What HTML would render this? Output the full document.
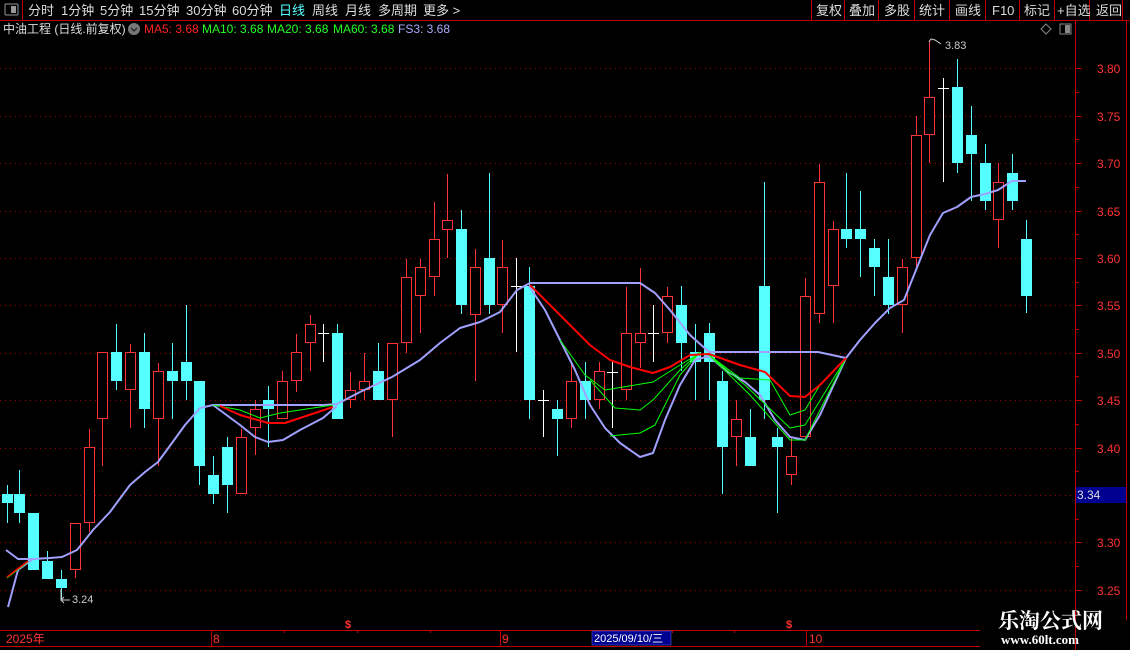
<!DOCTYPE html>
<html><head><meta charset="utf-8"><style>
html,body{margin:0;padding:0;background:#000;width:1130px;height:650px;overflow:hidden}
body{position:relative;font-family:"Liberation Sans","Noto Sans CJK SC",sans-serif}
.t{position:absolute;white-space:nowrap;font-size:12px;line-height:14px}
</style></head><body>
<svg id="s" width="1130" height="650" style="position:absolute;left:0;top:0" xmlns="http://www.w3.org/2000/svg" font-family="Liberation Sans, Noto Sans CJK SC, sans-serif">
<!-- top bar -->
<line x1="0" y1="20.5" x2="1130" y2="20.5" stroke="#c00000"/>
<line x1="22.5" y1="0" x2="22.5" y2="20" stroke="#c00000"/>
<rect x="5" y="4" width="13" height="11" fill="none" stroke="#999" rx="1"/>
<rect x="11" y="6" width="5" height="7" fill="#999"/>
<g stroke="#c00000">
<line x1="811.5" y1="0" x2="811.5" y2="20"/><line x1="844.5" y1="0" x2="844.5" y2="20"/>
<line x1="878.5" y1="0" x2="878.5" y2="20"/><line x1="914.5" y1="0" x2="914.5" y2="20"/>
<line x1="949.5" y1="0" x2="949.5" y2="20"/><line x1="985.5" y1="0" x2="985.5" y2="20"/>
<line x1="1019.5" y1="0" x2="1019.5" y2="20"/><line x1="1054.5" y1="0" x2="1054.5" y2="20"/>
<line x1="1089.5" y1="0" x2="1089.5" y2="20"/><line x1="1122.5" y1="0" x2="1122.5" y2="20"/>
</g>
<g font-size="13" fill="#ddd">
<text x="28" y="15">分时</text><text x="61" y="15">1分钟</text><text x="100" y="15">5分钟</text>
<text x="139" y="15">15分钟</text><text x="186" y="15">30分钟</text><text x="232" y="15">60分钟</text>
<text x="279" y="15" fill="#5ff">日线</text><text x="312" y="15">周线</text><text x="345" y="15">月线</text>
<text x="378" y="15">多周期</text><text x="423" y="15">更多 &gt;</text>
<text x="816" y="15">复权</text><text x="849" y="15">叠加</text><text x="884" y="15">多股</text>
<text x="919" y="15">统计</text><text x="955" y="15">画线</text><text x="992" y="15">F10</text>
<text x="1024" y="15">标记</text><text x="1057" y="15">+自选</text><text x="1096" y="15">返回</text>
</g>
<!-- legend -->
<g font-size="12">
<text x="3" y="33" fill="#ddd">中油工程 (日线.前复权)</text>
<circle cx="134" cy="29" r="6" fill="#777"/><path d="M131 28 L134 31 L137 28" stroke="#222" stroke-width="1.3" fill="none"/>
<text x="144" y="33" fill="#f22">MA5: 3.68</text>
<text x="202" y="33" fill="#2f2">MA10: 3.68</text>
<text x="267" y="33" fill="#2f2">MA20: 3.68</text>
<text x="333" y="33" fill="#2f2">MA60: 3.68</text>
<text x="398" y="33" fill="#aaf">FS3: 3.68</text>
</g>
<path d="M1046 24 L1051 29 L1046 34 L1041 29Z" fill="none" stroke="#888"/>
<rect x="1060" y="24" width="11" height="10" fill="none" stroke="#888"/><rect x="1065" y="25" width="5" height="8" fill="#888"/>
<!-- axis -->
<line x1="1075.5" y1="21" x2="1075.5" y2="650" stroke="#c00000"/>
<line x1="1126.5" y1="21" x2="1126.5" y2="620" stroke="#c00000"/>
<g id="grid"></g>
<g id="cand"></g>
<g fill="none" stroke-linejoin="round">
<polyline stroke="#a0a0ff" stroke-width="2" points="6,550 18,559 33,559 50,558 62,557 77,550 93,530 110,512 130,485 145,472 158,462 172,443 185,425 200,408 213,405 323,405 337,404 360,392 392,377 420,360 440,343 460,328 480,322 500,312 517,290 530,283 640,283 655,293 670,310 690,335 709,352 818,352 846,358 860,340 875,323 890,308 904,300 916,270 930,235 943,213 957,207 971,197 985,194 998,190 1012,181 1026,181"/>
<polyline stroke="#a0a0ff" stroke-width="2" points="8,607 18,570 33,559"/>
<polyline stroke="#a0a0ff" stroke-width="2" points="213,405 240,425 255,437 268,442 283,440 300,430 323,418 337,406"/>
<polyline stroke="#a0a0ff" stroke-width="2" points="529,286 545,310 560,340 575,370 590,405 605,428 620,443 640,457 653,453 665,420 680,385 695,360 709,356 725,370 745,382 760,395 775,420 790,437 805,440 820,415 846,358"/>
<g stroke="#0f0" stroke-width="1">
<polyline points="7,578 28,562"/>
<polyline points="213,405 240,410 260,418 280,413 300,410 333,405"/>
<polyline points="560,340 585,375 605,390 653,382 680,365 700,353"/>
<polyline points="590,380 615,408 640,410 653,400 680,370 700,352"/>
<polyline points="610,436 640,433 655,425 680,375 700,352"/>
<polyline points="709,355 740,378 770,380 790,415 805,410 820,385 846,358"/>
<polyline points="709,355 745,385 790,428 805,425 846,358"/>
<polyline points="709,355 750,395 790,440 805,440 846,358"/>
</g>
<polyline stroke="#f00" stroke-width="1.5" points="7,577 28,561"/>
<polyline stroke="#f00" stroke-width="2" points="220,406 240,415 268,423 285,423 300,418 333,407"/>
<polyline stroke="#f00" stroke-width="2" points="530,285 550,305 575,330 590,345 610,360 630,367 653,373 670,367 690,355 709,354 740,365 765,372 790,396 805,397 820,385 846,358"/>
</g>
<!-- annotations -->
<g fill="#ccc" font-size="11">
<text x="72" y="603">3.24</text><path d="M61 589 V600 H70 M64 597 L61 600 L64 603" stroke="#ccc" fill="none"/>
<text x="945" y="49">3.83</text><path d="M929 42 L931 39 L935 40 L941 44" stroke="#ccc" fill="none"/>
</g>
<!-- right labels -->
<g id="ax" font-size="12" fill="#f33"></g>
<rect x="1076" y="487" width="50" height="16" fill="#000090"/>
<text x="1077" y="499" font-size="12" fill="#ddd">3.34</text>
<!-- bottom -->
<line x1="0" y1="630.5" x2="980" y2="630.5" stroke="#c00000"/>
<line x1="0" y1="646.5" x2="980" y2="646.5" stroke="#c00000"/>
<g stroke="#c00000"><line x1="211.5" y1="631" x2="211.5" y2="646"/><line x1="500.5" y1="631" x2="500.5" y2="646"/><line x1="806.5" y1="631" x2="806.5" y2="646"/>
<line x1="284.5" y1="630" x2="284.5" y2="633"/><line x1="357.5" y1="630" x2="357.5" y2="633"/><line x1="430.5" y1="630" x2="430.5" y2="633"/><line x1="672.5" y1="630" x2="672.5" y2="633"/><line x1="734.5" y1="630" x2="734.5" y2="633"/></g>
<g font-size="12" fill="#f33"><text x="6" y="643">2025年</text><text x="213" y="643">8</text><text x="502" y="643">9</text><text x="809" y="643">10</text>
<text x="345" y="628" font-size="11" font-weight="bold">$</text><text x="786" y="628" font-size="11" font-weight="bold">$</text></g>
<rect x="592" y="631" width="79" height="14" fill="#000090" stroke="#66f" stroke-width="0.5"/>
<text x="594" y="642" font-size="11" fill="#fff">2025/09/10/三</text>
<text x="998" y="628" font-size="21" font-weight="bold" fill="#fff" font-family="Noto Serif CJK SC, serif">乐淘公式网</text>
<text x="1001" y="644" font-size="13" font-weight="bold" fill="#fff" font-family="Liberation Serif, serif">www.60lt.com</text>
</svg>
<script>
var NS="http://www.w3.org/2000/svg";
function el(p,n,a){var e=document.createElementNS(NS,n);for(var k in a)e.setAttribute(k,a[k]);p.appendChild(e);return e;}
var g=document.getElementById('grid'),ax=document.getElementById('ax');
var labs=["3.80","3.75","3.70","3.65","3.60","3.55","3.50","3.45","3.40","3.35","3.30","3.25"];
for(var i=0;i<12;i++){var y=68.3+i*47.4;
el(g,'line',{x1:0,y1:Math.round(y)+.5,x2:1075,y2:Math.round(y)+.5,stroke:'#a00000','stroke-dasharray':'1 4'});
el(g,'line',{x1:1075,y1:Math.round(y)+.5,x2:1082,y2:Math.round(y)+.5,stroke:'#c00000'});
el(g,'line',{x1:1075,y1:Math.round(y+23.7)+.5,x2:1079,y2:Math.round(y+23.7)+.5,stroke:'#c00000'});
if(i!=9){var t=el(ax,'text',{x:1097,y:Math.round(y)+5});t.textContent=labs[i];}}
var C=[[7,494,503,485,523,'c'],[19,494,513,470,523,'c'],[33,513,570,513,570,'c'],[47,561,579,551,579,'c'],[61,579,588,570,600,'c'],
[75,523,570,523,578,'r'],[89,447,523,429,532,'r'],[102,352,419,352,466,'r'],[116,352,381,324,390,'c'],[130,352,390,344,428,'r'],
[144,352,409,333,428,'c'],[158,371,419,363,466,'r'],[172,371,381,343,419,'c'],[186,362,381,305,400,'c'],[199,381,466,381,485,'c'],
[213,475,494,456,504,'c'],[227,447,485,437,513,'c'],[241,437,494,429,494,'r'],[255,409,428,400,455,'r'],[268,400,409,386,447,'c'],
[282,381,419,371,419,'r'],[296,352,381,334,392,'r'],[310,324,343,315,371,'r'],[323,333,333,324,362,'w'],[337,333,419,324,419,'c'],
[350,390,400,372,408,'r'],[364,381,390,353,400,'r'],[378,371,400,343,400,'c'],[392,343,400,343,437,'r'],[406,277,343,259,353,'r'],
[420,267,296,259,333,'r'],[434,239,277,202,296,'r'],[447,220,230,174,258,'r'],[461,229,305,210,314,'c'],[475,267,315,249,381,'r'],
[489,258,305,173,314,'c'],[502,267,305,240,333,'r'],[516,286,286,258,352,'w'],[529,286,400,267,419,'c'],[543,400,400,390,437,'w'],
[557,409,419,400,456,'c'],[571,381,419,362,428,'r'],[585,381,400,362,419,'c'],[599,371,400,362,409,'r'],[612,372,372,362,428,'w'],
[626,333,390,287,400,'r'],[640,333,343,268,368,'r'],[653,333,333,305,362,'w'],[667,296,333,287,343,'r'],[681,305,343,286,371,'c'],
[695,352,362,324,400,'c'],[709,333,362,323,400,'c'],[722,381,447,371,494,'c'],[736,419,437,400,466,'r'],[750,437,466,409,466,'c'],
[764,286,400,182,419,'c'],[777,437,447,428,513,'c'],[791,456,475,437,485,'r'],[805,296,437,278,437,'r'],[819,182,314,164,323,'r'],
[833,229,286,221,323,'r'],[846,229,239,173,248,'c'],[860,229,239,191,277,'c'],[874,248,267,239,296,'c'],[888,277,305,239,314,'c'],
[902,267,305,259,333,'r'],[916,135,258,116,267,'r'],[929,97,135,42,163,'r'],[943,88,88,78,182,'w'],[957,87,163,59,173,'c'],
[971,135,154,106,201,'c'],[985,163,201,144,210,'c'],[998,182,220,163,248,'r'],[1012,173,201,154,210,'c'],[1026,239,296,220,313,'c']];
var cg=document.getElementById('cand');
C.forEach(function(c){var x=c[0],col=c[5]=='c'?'#55ffff':(c[5]=='r'?'#ff3333':'#ffffff');
el(cg,'line',{x1:x+.5,y1:c[3],x2:x+.5,y2:c[4],stroke:col});
if(c[5]=='c')el(cg,'rect',{x:x-5,y:c[1],width:11,height:Math.max(1,c[2]-c[1]),fill:col});
else if(c[5]=='r')el(cg,'rect',{x:x-4.5,y:c[1]+.5,width:10,height:c[2]-c[1]-1,fill:'#000',stroke:col});
else el(cg,'line',{x1:x-5,y1:c[1]+.5,x2:x+6,y2:c[1]+.5,stroke:col});});
</script>
</body></html>
